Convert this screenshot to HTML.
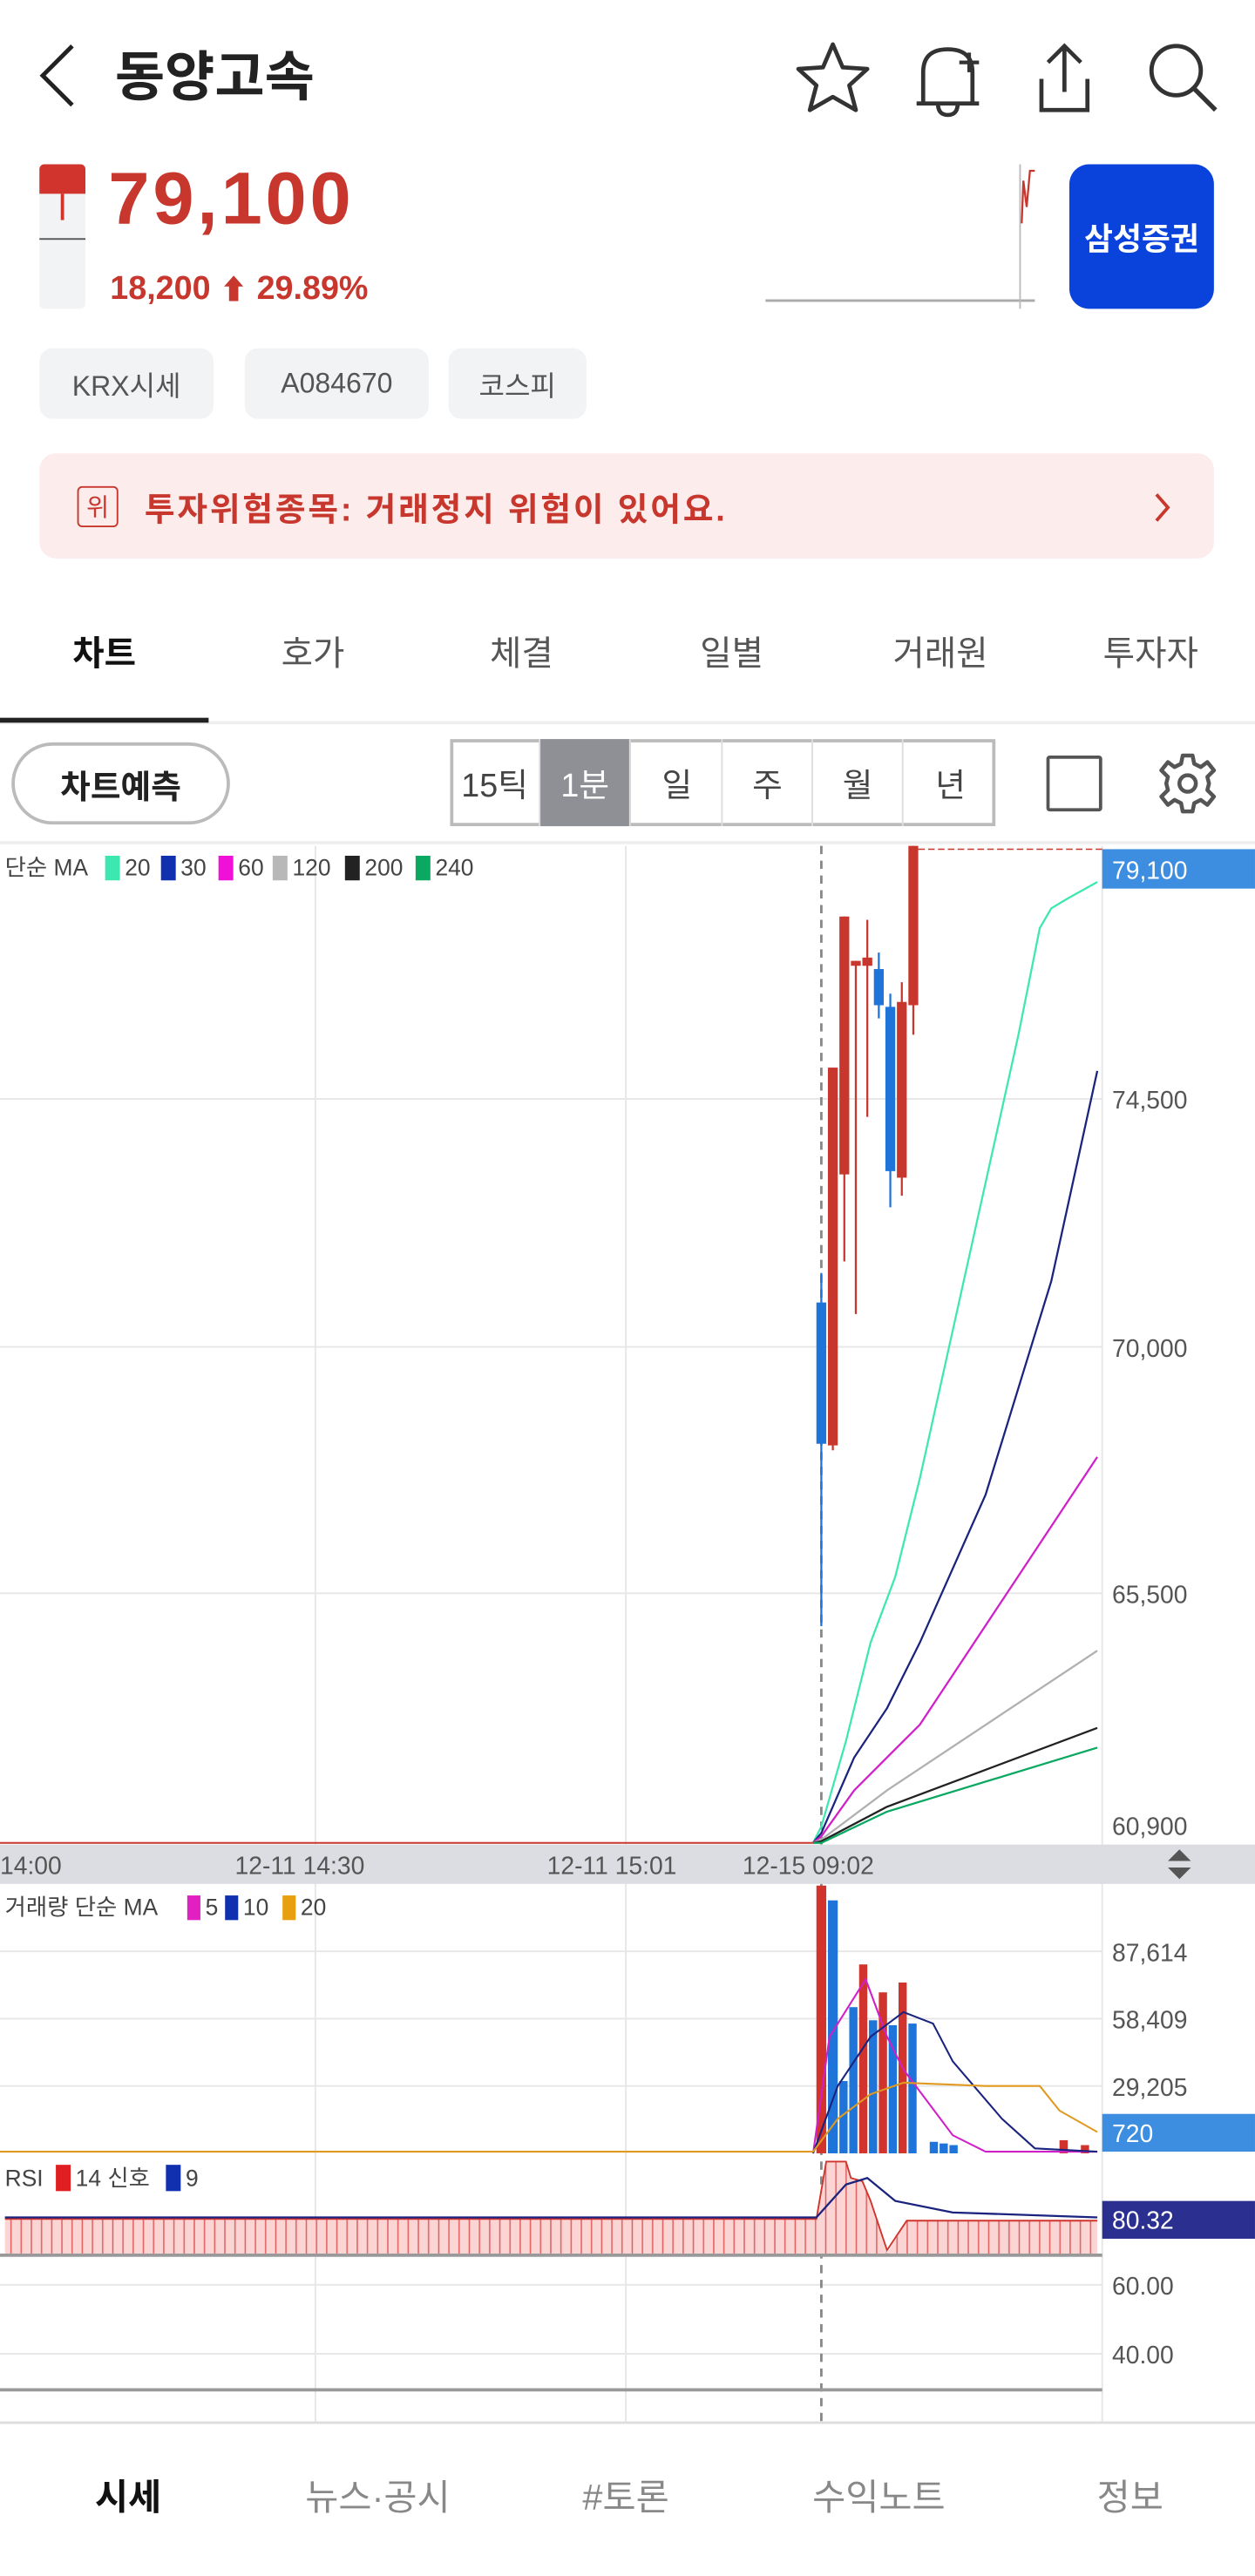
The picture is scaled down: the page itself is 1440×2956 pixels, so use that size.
<!DOCTYPE html>
<html><head><meta charset="utf-8">
<style>
*{margin:0;padding:0;box-sizing:border-box}
html,body{width:1440px;height:2956px;overflow:hidden;background:#fff}
body{font-family:"Liberation Sans","Noto Sans CJK KR",sans-serif}
#w{position:absolute;left:0;top:0;width:764px;height:1568px;transform:scale(1.8848);transform-origin:0 0}
.a{position:absolute;white-space:nowrap}
.chip{position:absolute;top:212px;height:43px;background:#f2f3f5;border-radius:8px;font-size:17px;color:#555;display:flex;align-items:center;justify-content:center}
.tab{position:absolute;top:382px;width:127px;text-align:center;font-size:21px;color:#555}
.seg{position:absolute;top:450px;height:53px;width:55.3px;display:flex;align-items:center;justify-content:center;font-size:20px;color:#444;border-right:1px solid #ddd}
.nav{position:absolute;top:1503px;font-size:22px;color:#888;text-align:center;width:140px}
</style></head><body><div id="w">
<svg class="a" style="left:0;top:0" width="764" height="90">
<path d="M44 28 L26 46 L44 64" fill="none" stroke="#222" stroke-width="2.6"/>
<path d="M507 27 L513 41 L528 42 L517 52 L521 67 L507 59 L493 67 L497 52 L486 42 L501 41 Z" fill="none" stroke="#333" stroke-width="2.5" stroke-linejoin="round"/>
<path d="M562 63 L562 44 Q562 30 577 30 Q592 30 592 44 L592 63 Z M558 63 L596 63 M571 63 Q571 70 577 70 Q583 70 583 63" fill="none" stroke="#333" stroke-width="2.5"/>
<path d="M590 32 L590 44 M584 38 L596 38" stroke="#333" stroke-width="2.2"/>
<path d="M648 28 L648 56 M638 38 L648 28 L658 38 M634 48 L634 67 L662 67 L662 48" fill="none" stroke="#333" stroke-width="2.5"/>
<circle cx="716" cy="43" r="15" fill="none" stroke="#333" stroke-width="2.6"/><path d="M727 54 L740 67" stroke="#333" stroke-width="2.8"/>
</svg>
<div class="a" style="left:70px;top:20px;font-size:33px;font-weight:bold;color:#222">동양고속</div>
<div class="a" style="left:24px;top:100px;width:28px;height:88px;background:#f2f3f5;border-radius:3px"></div>
<div class="a" style="left:24px;top:100px;width:28px;height:18px;background:#d0342c;border-radius:3px 3px 0 0"></div>
<div class="a" style="left:37px;top:118px;width:2px;height:16px;background:#d0342c"></div>
<div class="a" style="left:24px;top:145px;width:28px;height:1px;background:#555"></div>
<div class="a" style="left:66px;top:95px;font-size:45px;font-weight:bold;color:#c8372d;letter-spacing:2px">79,100</div>
<div class="a" style="left:67px;top:162px;font-size:20px;font-weight:bold;color:#c8372d">18,200 <span style="font-size:17px">⬆</span> 29.89%</div>
<svg class="a" style="left:460px;top:96px" width="180" height="95">
<line x1="6" y1="87" x2="170" y2="87" stroke="#aaa" stroke-width="1.5"/>
<line x1="161" y1="4" x2="161" y2="92" stroke="#bbb" stroke-width="1"/>
<path d="M162 40 L163 14 L165 30 L167 8 L170 8" fill="none" stroke="#c8372d" stroke-width="1.2"/>
</svg>
<div class="a" style="left:651px;top:100px;width:88px;height:88px;background:#0a43dc;border-radius:12px;color:#fff;font-size:19px;font-weight:bold;display:flex;align-items:center;justify-content:center">삼성증권</div>
<div class="chip" style="left:24px;width:106px">KRX시세</div>
<div class="chip" style="left:149px;width:112px">A084670</div>
<div class="chip" style="left:273px;width:84px">코스피</div>
<div class="a" style="left:24px;top:276px;width:715px;height:64px;background:#fcecec;border-radius:10px"></div>
<div class="a" style="left:47px;top:296px;width:25px;height:25px;border:1.5px solid #c8372d;border-radius:3px;color:#c8372d;font-size:15px;display:flex;align-items:center;justify-content:center">위</div>
<div class="a" style="left:88px;top:294px;font-size:20px;color:#c8372d;font-weight:bold;letter-spacing:1.5px">투자위험종목: 거래정지 위험이 있어요.</div>
<svg class="a" style="left:700px;top:298px" width="16" height="22"><path d="M4 3 L11 11 L4 19" fill="none" stroke="#c8372d" stroke-width="2"/></svg>
<div class="tab" style="left:0;color:#111;font-weight:bold">차트</div>
<div class="tab" style="left:127px">호가</div>
<div class="tab" style="left:254px">체결</div>
<div class="tab" style="left:382px">일별</div>
<div class="tab" style="left:509px">거래원</div>
<div class="tab" style="left:637px">투자자</div>
<div class="a" style="left:0;top:439px;width:764px;height:2px;background:#eee"></div>
<div class="a" style="left:0;top:437px;width:127px;height:3px;background:#222"></div>
<div class="a" style="left:7px;top:452px;width:133px;height:50px;border:2px solid #bbb;border-radius:25px;font-size:20px;font-weight:bold;color:#222;display:flex;align-items:center;justify-content:center">차트예측</div>
<div class="a" style="left:274px;top:450px;width:332px;height:53px;border:2px solid #bbb"></div>
<div class="seg" style="left:274px">15틱</div>
<div class="seg" style="left:329px;background:#8e9096;color:#fff">1분</div>
<div class="seg" style="left:385px">일</div>
<div class="seg" style="left:440px">주</div>
<div class="seg" style="left:495px">월</div>
<div class="seg" style="left:551px;border-right:none">년</div>
<div class="a" style="left:637px;top:460px;width:34px;height:34px;border:2.5px solid #555;border-radius:2px"></div>
<svg class="a" style="left:703px;top:457px" width="40" height="40"><g transform="translate(20 20)" fill="none" stroke="#555" stroke-width="2.4"><path d="M-3 -17 L3 -17 L4 -12 L8 -10 L12 -13 L16 -8 L12 -4 L13 0 L12 4 L16 8 L12 13 L8 10 L4 12 L3 17 L-3 17 L-4 12 L-8 10 L-12 13 L-16 8 L-12 4 L-13 0 L-12 -4 L-16 -8 L-12 -13 L-8 -10 L-4 -12 Z" stroke-linejoin="round"/><circle r="5"/></g></svg>
<svg class="a" style="left:0;top:0" width="764" height="1568" font-family="Liberation Sans, Noto Sans CJK KR, sans-serif">
<line x1="0" y1="513" x2="764" y2="513" stroke="#eee" stroke-width="2"/>
<g stroke="#e6e6e6" stroke-width="1">
<line x1="0" y1="669" x2="671" y2="669"/><line x1="0" y1="820" x2="671" y2="820"/><line x1="0" y1="970" x2="671" y2="970"/>
<line x1="0" y1="1188" x2="671" y2="1188"/><line x1="0" y1="1229" x2="671" y2="1229"/><line x1="0" y1="1270" x2="671" y2="1270"/>
<line x1="0" y1="1391" x2="671" y2="1391"/><line x1="0" y1="1433" x2="671" y2="1433"/>
<line x1="192" y1="515" x2="192" y2="1475"/><line x1="381" y1="515" x2="381" y2="1475"/>
<line x1="671" y1="515" x2="671" y2="1475"/>
</g>
<line x1="500" y1="515" x2="500" y2="1475" stroke="#888" stroke-width="1.5" stroke-dasharray="5,4"/>
<line x1="559" y1="517" x2="671" y2="517" stroke="#c8372d" stroke-width="0.8" stroke-dasharray="4,2"/>
<g fill="none" stroke-width="1.2">
<polyline stroke="#3de8b0" points="495,1122 500,1112 515,1060 530,1000 545,960 560,900 580,810 600,720 620,630 633,565 640,553 650,547 668,537"/>
<polyline stroke="#1a237e" points="495,1122 500,1116 520,1070 540,1040 560,1000 600,910 640,780 668,652"/>
<polyline stroke="#d020c8" points="495,1122 500,1118 520,1090 540,1070 560,1050 668,887"/>
<polyline stroke="#b0b0b0" points="495,1122 500,1120 540,1090 668,1005"/>
<polyline stroke="#222" points="495,1122 500,1121 540,1100 668,1052"/>
<polyline stroke="#0aa860" points="495,1122 500,1122 540,1103 668,1064"/>
</g>
<line x1="0" y1="1122" x2="495" y2="1122" stroke="#c8372d" stroke-width="1"/>
<g stroke-width="1.2">
<line x1="500" y1="775" x2="500" y2="990" stroke="#1e74d8"/><rect x="497" y="793" width="6" height="86" fill="#1e74d8"/>
<line x1="507" y1="650" x2="507" y2="883" stroke="#c8372d"/><rect x="504" y="650" width="6" height="230" fill="#c8372d"/>
<line x1="514" y1="558" x2="514" y2="768" stroke="#c8372d"/><rect x="511" y="558" width="6" height="157" fill="#c8372d"/>
<line x1="521" y1="585" x2="521" y2="800" stroke="#c8372d"/><rect x="518" y="585" width="6" height="3" fill="#c8372d"/>
<line x1="528" y1="560" x2="528" y2="680" stroke="#c8372d"/><rect x="525" y="583" width="6" height="5" fill="#c8372d"/>
<line x1="535" y1="580" x2="535" y2="620" stroke="#1e74d8"/><rect x="532" y="590" width="6" height="22" fill="#1e74d8"/>
<line x1="542" y1="605" x2="542" y2="735" stroke="#1e74d8"/><rect x="539" y="613" width="6" height="100" fill="#1e74d8"/>
<line x1="549" y1="598" x2="549" y2="728" stroke="#c8372d"/><rect x="546" y="610" width="6" height="107" fill="#c8372d"/>
<line x1="556" y1="515" x2="556" y2="630" stroke="#c8372d"/><rect x="553" y="515" width="6" height="97" fill="#c8372d"/>
</g>
<rect x="671" y="517" width="93" height="24" fill="#3d8ee0"/>
<g font-size="15" fill="#555">
<text x="677" y="535" fill="#fff">79,100</text>
<text x="677" y="675">74,500</text><text x="677" y="826">70,000</text><text x="677" y="976">65,500</text><text x="677" y="1117">60,900</text>
<text x="677" y="1194">87,614</text><text x="677" y="1235">58,409</text><text x="677" y="1276">29,205</text>
<text x="677" y="1397">60.00</text><text x="677" y="1439">40.00</text>
</g>
<g font-size="14" fill="#444">
<text x="3" y="533">단순 MA</text>
<rect x="64" y="521" width="9" height="15" fill="#3de8b0"/><text x="76" y="533">20</text>
<rect x="98" y="521" width="9" height="15" fill="#1030b0"/><text x="110" y="533">30</text>
<rect x="133" y="521" width="9" height="15" fill="#f010d8"/><text x="145" y="533">60</text>
<rect x="166" y="521" width="9" height="15" fill="#b8b8b8"/><text x="178" y="533">120</text>
<rect x="210" y="521" width="9" height="15" fill="#222"/><text x="222" y="533">200</text>
<rect x="253" y="521" width="9" height="15" fill="#0aa860"/><text x="265" y="533">240</text>
</g>
<rect x="0" y="1123" width="764" height="24" fill="#dcdde2"/>
<g font-size="15" fill="#555"><text x="0" y="1141">14:00</text><text x="143" y="1141">12-11 14:30</text><text x="333" y="1141">12-11 15:01</text><text x="452" y="1141">12-15 09:02</text></g>
<path d="M711 1133 L718 1126 L725 1133 Z M711 1137 L725 1137 L718 1144 Z" fill="#555"/>
<g font-size="14" fill="#444">
<text x="3" y="1166">거래량 단순 MA</text>
<rect x="114" y="1154" width="8" height="15" fill="#e020c0"/><text x="125" y="1166">5</text>
<rect x="137" y="1154" width="8" height="15" fill="#1030b0"/><text x="148" y="1166">10</text>
<rect x="172" y="1154" width="8" height="15" fill="#e8a010"/><text x="183" y="1166">20</text>
</g>
<g>
<rect x="497" y="1148" width="6" height="163" fill="#d0342c"/>
<rect x="504" y="1157" width="6" height="154" fill="#1e74d8"/>
<rect x="511" y="1267" width="5" height="44" fill="#1e74d8"/>
<rect x="517" y="1222" width="5" height="89" fill="#1e74d8"/>
<rect x="523" y="1196" width="5" height="115" fill="#d0342c"/>
<rect x="529" y="1230" width="5" height="81" fill="#1e74d8"/>
<rect x="535" y="1213" width="5" height="98" fill="#d0342c"/>
<rect x="541" y="1233" width="5" height="78" fill="#1e74d8"/>
<rect x="547" y="1207" width="5" height="104" fill="#d0342c"/>
<rect x="553" y="1232" width="5" height="79" fill="#1e74d8"/>
<rect x="566" y="1304" width="5" height="7" fill="#1e74d8"/>
<rect x="572" y="1305" width="5" height="6" fill="#1e74d8"/>
<rect x="578" y="1306" width="5" height="5" fill="#1e74d8"/>
<rect x="645" y="1303" width="5" height="8" fill="#d0342c"/>
<rect x="658" y="1306" width="5" height="5" fill="#d0342c"/>
</g>
<g fill="none" stroke-width="1.1">
<polyline stroke="#d020c8" points="495,1311 505,1240 527,1205 540,1240 550,1260 580,1300 600,1310 668,1310"/>
<polyline stroke="#1a237e" points="495,1311 510,1270 530,1240 550,1225 568,1232 580,1255 610,1290 630,1308 668,1310"/>
<polyline stroke="#e09a20" points="0,1310 495,1310 510,1290 530,1275 550,1268 600,1270 633,1270 645,1285 668,1298"/>
</g>
<rect x="671" y="1287" width="93" height="23" fill="#3d8ee0"/><text x="677" y="1304" font-size="15" fill="#fff">720</text>
<g font-size="14" fill="#444">
<text x="3" y="1331">RSI</text><rect x="34" y="1318" width="9" height="16" fill="#e02020"/><text x="46" y="1331">14 신호</text>
<rect x="101" y="1318" width="9" height="16" fill="#1030b0"/><text x="113" y="1331">9</text>
</g>
<defs><pattern id="h" width="6.2" height="30" patternUnits="userSpaceOnUse"><rect width="6.2" height="30" fill="#fbd4d4"/><line x1="0.5" y1="0" x2="0.5" y2="30" stroke="#e06060" stroke-width="0.8"/></pattern></defs>
<rect x="3" y="1350" width="494" height="22" fill="url(#h)"/>
<path d="M497 1350 L503 1316 L515 1316 L518 1326 L525 1328 L530 1340 L540 1372 L497 1372 Z" fill="url(#h)"/>
<path d="M540 1372 L552 1352 L668 1352 L668 1372 Z" fill="url(#h)"/>
<polyline fill="none" stroke="#d0342c" stroke-width="1" points="3,1351 497,1351 503,1316 515,1316 518,1326 525,1328 530,1340 540,1370 552,1352 668,1352"/>
<polyline fill="none" stroke="#1a237e" stroke-width="1.2" points="3,1350 497,1350 515,1330 528,1326 545,1340 580,1347 668,1350"/>
<rect x="671" y="1340" width="93" height="23" fill="#2b2f8f"/><text x="677" y="1357" font-size="15" fill="#fff">80.32</text>
<line x1="0" y1="1373" x2="671" y2="1373" stroke="#999" stroke-width="2"/>
<line x1="0" y1="1455" x2="671" y2="1455" stroke="#999" stroke-width="2"/>
<line x1="0" y1="1475" x2="764" y2="1475" stroke="#ddd" stroke-width="1.5"/>
</svg>
<div class="nav" style="left:8px;color:#111;font-weight:bold">시세</div>
<div class="nav" style="left:160px">뉴스·공시</div>
<div class="nav" style="left:311px">#토론</div>
<div class="nav" style="left:465px">수익노트</div>
<div class="nav" style="left:618px">정보</div>
</div></body></html>
